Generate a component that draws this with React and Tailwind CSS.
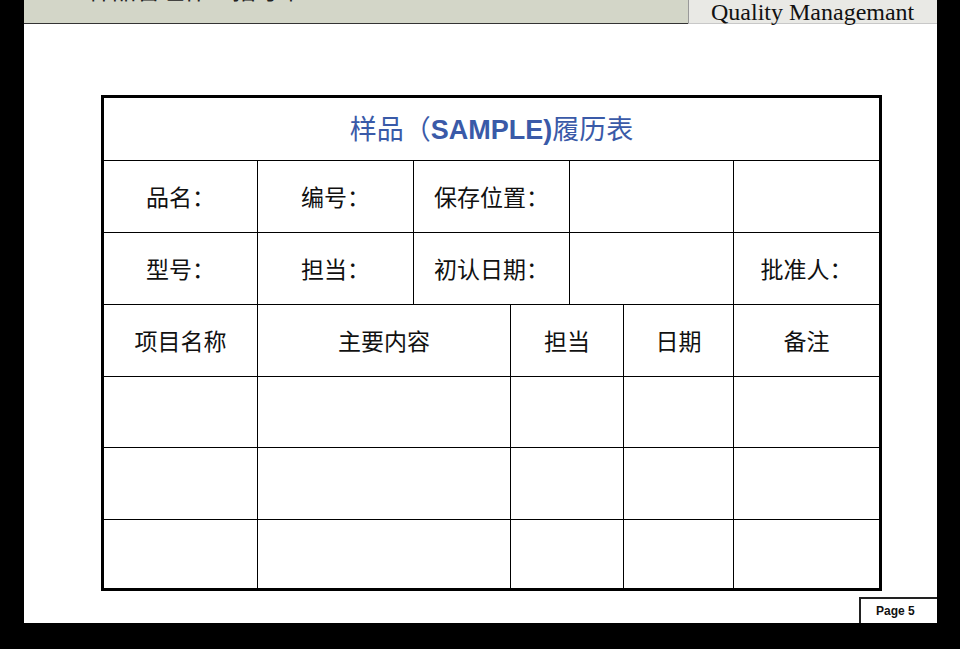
const cjk = { fontFamily: '"Noto Sans CJK SC", "Noto Sans", sans-serif' };

function Row({ cells, h, last }) {
  return (
    <div className={`flex ${last ? "" : "border-b border-black"}`} style={{ height: h }}>
      {cells.map((c, i) => (
        <div
          key={i}
          className={`flex items-center justify-center text-[23px] text-[#111] ${
            i < cells.length - 1 ? "border-r border-black" : "flex-1"
          }`}
          style={i < cells.length - 1 ? { width: c.w } : undefined}
        >
          {c.t}
        </div>
      ))}
    </div>
  );
}

export default function App() {
  const top = [154, 156, 156, 164];
  const bottom = [154, 253, 113, 110];
  const mk = (ws, texts) => [...ws, 0].map((w, i) => ({ w, t: texts[i] || "" }));

  return (
    <div className="w-[960px] h-[649px] bg-black overflow-hidden" style={cjk}>
      <div className="ml-[24px] w-[913px] h-[623px] bg-white flex flex-col">
        {/* header */}
        <div className="flex h-[24px] shrink-0">
          <div className="flex-1 bg-[#d3d6c8] border-b border-[#333] overflow-hidden">
            <div className="ml-[64px] -mt-[25px] text-[24px] leading-[27px] text-[#222]">
              样品管理作业指导书
            </div>
          </div>
          <div className="w-[249px] bg-[#e9e9e5] border-l border-[#999] border-b border-b-[#c8c8c8] flex items-center pl-[22px]">
            <span
              className="text-[24px] leading-[22px] text-[#111]"
              style={{ fontFamily: '"Liberation Serif", serif' }}
            >
              Quality Managemant
            </span>
          </div>
        </div>

        {/* body */}
        <div className="flex-1 pl-[77px] pt-[71px]">
          <div className="w-[781px] h-[496px] border-[3px] border-black flex flex-col">
            <div className="h-[63px] border-b border-black flex items-center justify-center">
              <span className="text-[27px] text-[#3a5aa8]">
                样品（
                <span className="font-bold" style={{ fontFamily: '"Liberation Sans", Arial, sans-serif' }}>
                  SAMPLE)
                </span>
                履历表
              </span>
            </div>
            <Row h={72} cells={mk(top, ["品名：", "编号：", "保存位置：", "", ""])} />
            <Row h={72} cells={mk(top, ["型号：", "担当：", "初认日期：", "", "批准人："])} />
            <Row h={72} cells={mk(bottom, ["项目名称", "主要内容", "担当", "日期", "备注"])} />
            <Row h={71} cells={mk(bottom, [])} />
            <Row h={72} cells={mk(bottom, [])} />
            <div className="flex-1 flex">
              {bottom.map((w, i) => (
                <div key={i} className="border-r border-black" style={{ width: w }} />
              ))}
              <div className="flex-1" />
            </div>
          </div>
        </div>

        {/* footer */}
        <div className="flex justify-end h-[26px] shrink-0 -mt-[6px]">
          <div
            className="w-[78px] border-t-2 border-l-2 border-[#222] flex items-center pl-[15px] text-[12px] font-bold text-[#111]"
            style={{ fontFamily: '"Liberation Sans", Arial, sans-serif' }}
          >
            Page 5
          </div>
        </div>
      </div>
    </div>
  );
}
